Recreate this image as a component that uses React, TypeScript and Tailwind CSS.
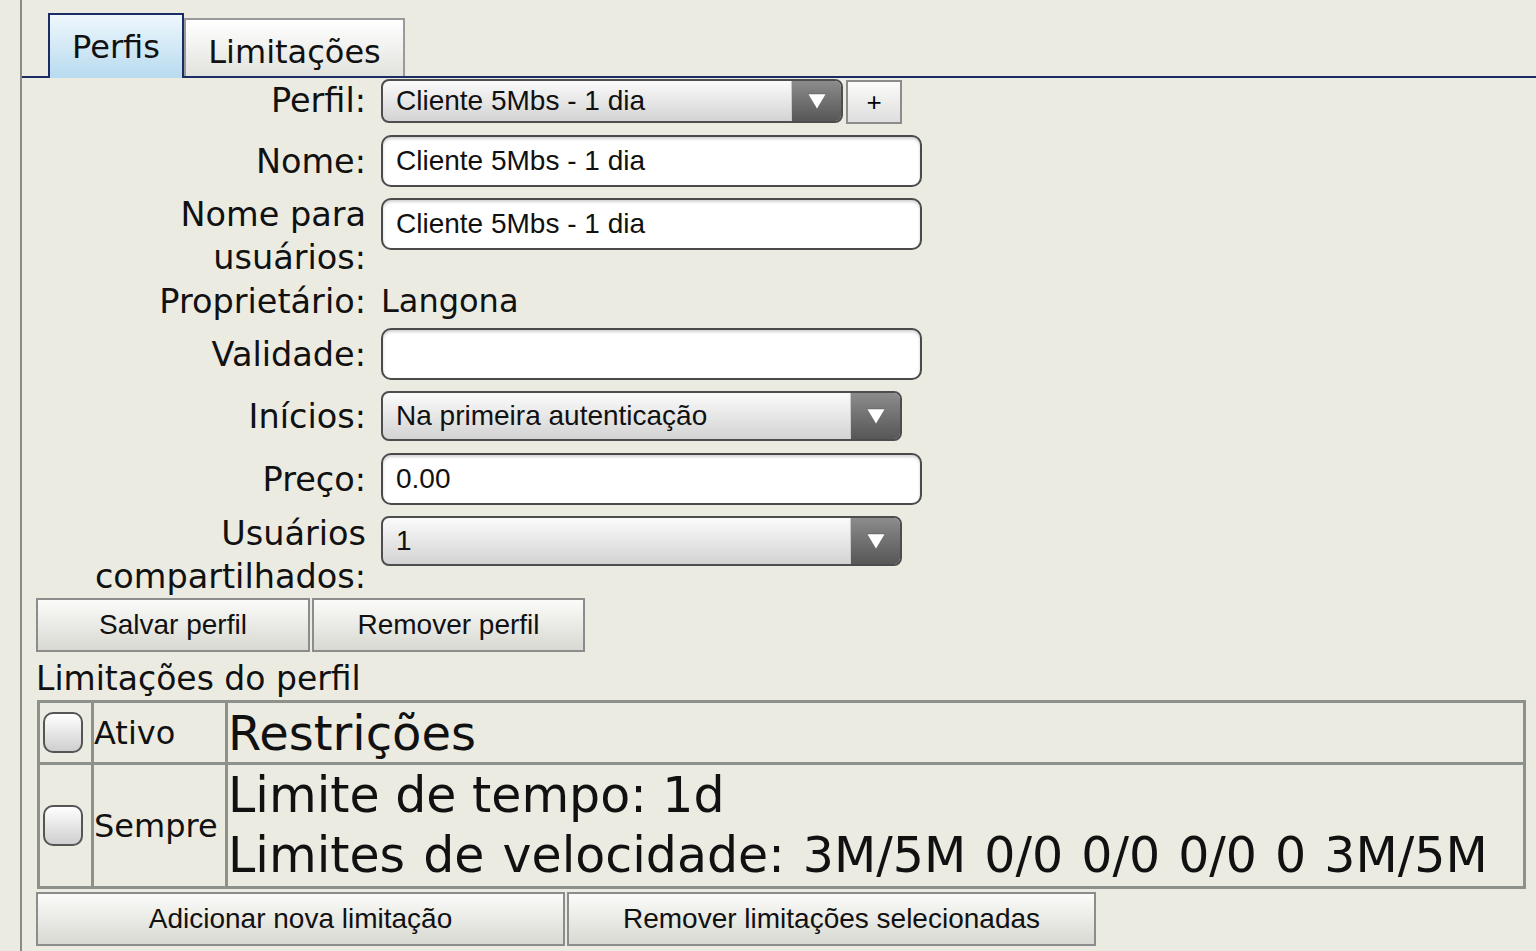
import React from 'react';

const LABEL_FONT = { fontFamily: '"DejaVu Sans", Verdana, sans-serif' };
const FIELD_FONT = { fontFamily: '"Liberation Sans", Arial, sans-serif' };

function Arrow() {
  return (
    <svg width="20" height="17" viewBox="0 0 20 17">
      <path d="M1 1 H19 L10 16 Z" fill="#ffffff" stroke="#4a4a4a" strokeWidth="0.4" />
    </svg>
  );
}

function Select({ value, width }: { value: string; width: string }) {
  return (
    <div
      className={`${width} h-full flex rounded-[8px] border-2 border-[#4d4d4d] overflow-hidden bg-linear-to-b from-[#fbfbfb] to-[#d3d3d3]`}
    >
      <div className="flex-1 flex items-center pl-[13px] text-[28px] text-[#111]" style={FIELD_FONT}>
        {value}
      </div>
      <div className="w-[50px] flex items-center justify-center border-l border-[#c8c8c8] bg-linear-to-b from-[#8c8c8c] to-[#575757]">
        <Arrow />
      </div>
    </div>
  );
}

function TextField({ value }: { value: string }) {
  return (
    <div
      className="w-[541px] h-[52px] flex items-center rounded-[10px] border-2 border-[#4a4a4a] bg-white pl-[13px] text-[28px] text-[#111] shadow-[inset_0_2px_3px_rgba(0,0,0,0.18)]"
      style={FIELD_FONT}
    >
      {value}
    </div>
  );
}

function Label({ children }: { children: React.ReactNode }) {
  return (
    <div className="w-[344px] shrink-0 text-right text-[33.5px] leading-[43px] text-[#111] mr-[15px]" style={LABEL_FONT}>
      {children}
    </div>
  );
}

function Button({ children, width }: { children: React.ReactNode; width: string }) {
  return (
    <button
      className={`${width} h-[54px] border-2 border-[#8c8c8c] bg-linear-to-b from-[#fbfbf9] to-[#d9d9d3] text-[28px] text-[#111]`}
      style={FIELD_FONT}
    >
      {children}
    </button>
  );
}

function Checkbox() {
  return <div className="w-[40px] h-[41px] rounded-[10px] border-2 border-[#555] bg-linear-to-b from-white to-[#cfcfcf]" />;
}

export default function App() {
  return (
    <div className="w-full h-screen overflow-hidden bg-[#ebebe2] pl-[20px]">
      <div className="h-full border-l-2 border-[#8a8a8a] pt-[13px]">
        {/* Tabs */}
        <div className="flex items-end pl-[26px] border-b-2 border-[#1b2b63]" style={LABEL_FONT}>
          <div className="w-[136px] h-[65px] -mb-[2px] border-2 border-b-0 border-[#1b2b63] bg-linear-to-b from-[#eef7fc] to-[#b7dbef] flex items-center justify-center text-[32px] text-[#111]">
            Perfis
          </div>
          <div className="w-[221px] h-[58px] border-2 border-b-0 border-[#9a9a9a] bg-linear-to-b from-white to-[#e2e2de] flex items-center justify-center text-[32px] text-[#111] pt-[8px]">
            Limitações
          </div>
        </div>

        {/* Form */}
        <div className="flex flex-col">
          <div className="flex items-start mt-[1px] h-[45px]">
            <Label>Perfil:</Label>
            <div className="h-[44px] flex">
              <Select value="Cliente 5Mbs - 1 dia" width="w-[462px]" />
            </div>
            <div
              className="ml-[3px] mt-[1px] w-[56px] h-[44px] border-2 border-[#8c8c8c] bg-linear-to-b from-[#fbfbf9] to-[#dedede] flex items-center justify-center text-[26px]"
              style={FIELD_FONT}
            >
              +
            </div>
          </div>

          <div className="flex items-center mt-[11px]">
            <Label>Nome:</Label>
            <TextField value="Cliente 5Mbs - 1 dia" />
          </div>

          <div className="flex items-start mt-[6px]">
            <Label>
              Nome para
              <br />
              usuários:
            </Label>
            <div className="mt-[5px]">
              <TextField value="Cliente 5Mbs - 1 dia" />
            </div>
          </div>

          <div className="flex items-center mt-[1px]">
            <Label>Proprietário:</Label>
            <div className="text-[32px] leading-[43px] text-[#111]" style={LABEL_FONT}>
              Langona
            </div>
          </div>

          <div className="flex items-center mt-[5px]">
            <Label>Validade:</Label>
            <TextField value="" />
          </div>

          <div className="flex items-center mt-[11px]">
            <Label>Inícios:</Label>
            <div className="h-[50px] flex">
              <Select value="Na primeira autenticação" width="w-[521px]" />
            </div>
          </div>

          <div className="flex items-center mt-[12px]">
            <Label>Preço:</Label>
            <TextField value="0.00" />
          </div>

          <div className="flex items-start mt-[7px]">
            <Label>
              Usuários
              <br />
              compartilhados:
            </Label>
            <div className="h-[50px] flex mt-[4px]">
              <Select value="1" width="w-[521px]" />
            </div>
          </div>

          <div className="flex gap-[2px] ml-[14px]">
            <Button width="w-[274px]">Salvar perfil</Button>
            <Button width="w-[273px]">Remover perfil</Button>
          </div>

          <div className="ml-[14px] text-[33px] leading-[48px] text-[#111] pt-[3px] -mb-[3px]" style={LABEL_FONT}>
            Limitações do perfil
          </div>

          <table
            className="ml-[15px] w-[1489px] table-fixed border-collapse border-[3px] border-[#8c918c] text-[#111]"
            style={LABEL_FONT}
          >
            <colgroup>
              <col className="w-[54px]" />
              <col className="w-[134px]" />
              <col />
            </colgroup>
            <tbody>
              <tr className="h-[62px]">
                <td className="border-[3px] border-[#8c918c] pl-[3px] align-middle">
                  <Checkbox />
                </td>
                <td className="border-[3px] border-[#8c918c] text-[32px] align-middle">Ativo</td>
                <td className="border-[3px] border-[#8c918c] text-[48px] leading-[56px] align-middle">Restrições</td>
              </tr>
              <tr className="h-[124px]">
                <td className="border-[3px] border-[#8c918c] pl-[3px] align-middle">
                  <Checkbox />
                </td>
                <td className="border-[3px] border-[#8c918c] text-[32px] align-middle">Sempre</td>
                <td className="border-[3px] border-[#8c918c] text-[49px] leading-[60px] align-middle">
                  <div>Limite de tempo: 1d</div>
                  <div className="[word-spacing:2.5px]">Limites de velocidade: 3M/5M 0/0 0/0 0/0 0 3M/5M</div>
                </td>
              </tr>
            </tbody>
          </table>

          <div className="flex gap-[2px] ml-[14px] mt-[3px]">
            <Button width="w-[529px]">Adicionar nova limitação</Button>
            <Button width="w-[529px]">Remover limitações selecionadas</Button>
          </div>
        </div>
      </div>
    </div>
  );
}
